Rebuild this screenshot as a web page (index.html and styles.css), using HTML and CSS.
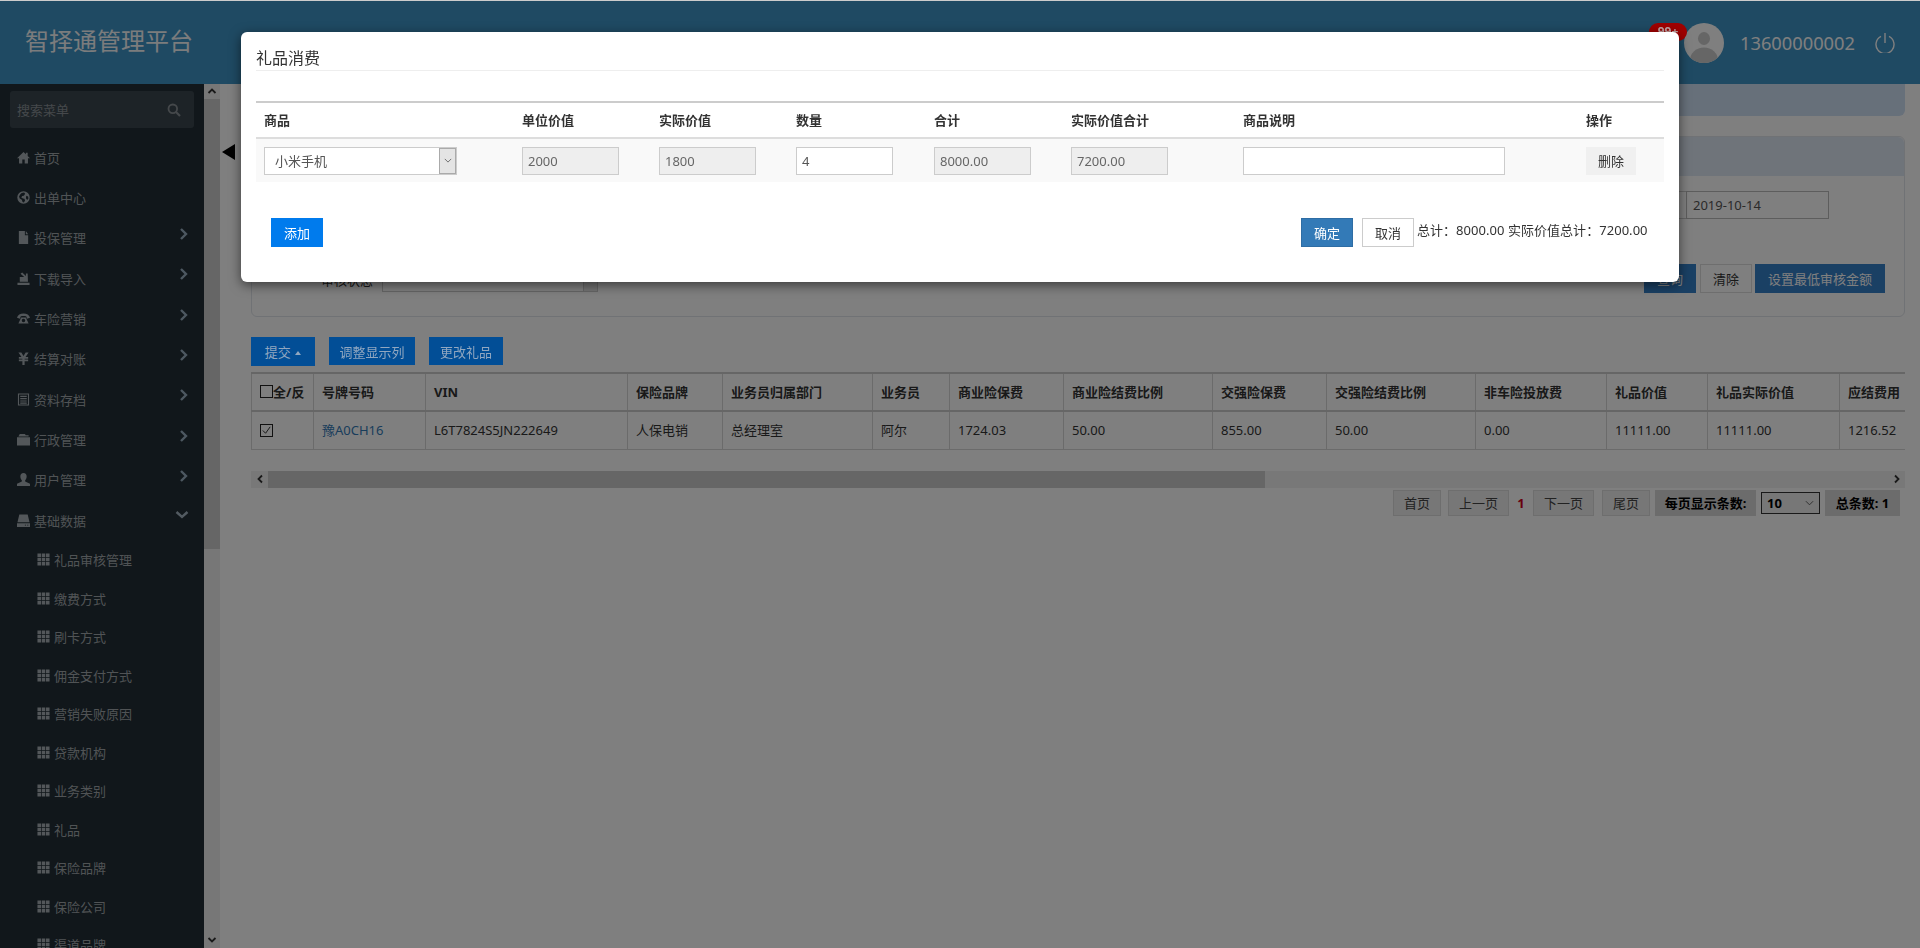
FILE: index.html
```html
<!DOCTYPE html>
<html lang="zh-CN">
<head>
<meta charset="utf-8">
<title>智择通管理平台</title>
<link rel="stylesheet" href="styles.css">
</head>
<body>
<svg class="defs" width="0" height="0">
  <symbol id="i-home" viewBox="0 0 14 14"><path d="M7 1 0 7.800h2.200V13.500h3.500V9.200h2.600v4.300h3.500V7.800H14l-2.500-2.400V2H9.600v1.500z"/></symbol>
  <symbol id="i-globe" viewBox="0 0 14 14"><path fill-rule="evenodd" d="M7 .3a6.700 6.700 0 1 0 0 13.400A6.700 6.700 0 0 0 7 .3zM5 2.200 7.600 1.600l1.200 1.400L7.400 5 5.600 5.400 4.600 7l1.800 1.200L8 8.400l.7 1.800L7.400 12.300 6 11.900 5.200 9.400 3 8 2.200 6 3.400 3.800zM10 5l2 .8.300 2.200-1.300 1.800-1.400-2z"/></symbol>
  <symbol id="i-phone" viewBox="0 0 14 14"><path fill-rule="evenodd" d="M0 6.200C.6 3 3.600 1.500 7 1.500s6.400 1.500 7 4.700l-3.300 1-.6-2.400C8.700 4.300 5.300 4.300 3.900 4.800l-.6 2.400zM4.500 5.800h5L12.500 12.500H1.500zM7 7.200a1.900 1.900 0 1 0 0 3.800 1.900 1.900 0 0 0 0-3.800z"/></symbol>
  <symbol id="i-file" viewBox="0 0 14 14"><path d="M2 0h6.500v4.500H12V14H2zM9.500 0 12 3.500H9.500z"/></symbol>
  <symbol id="i-import" viewBox="0 0 14 14"><path d="M.5 11.500h13V14H.5zM3 5.500h4.800L3.800 2 5.600.5 9.600 4.400V1.500h1.900l.3 9H3z"/></symbol>
  <symbol id="i-yen" viewBox="0 0 14 14"><path d="M1.500 .5h3.200L7 4.200 9.300 .5h3.200L9.200 5.500h2.800v1.700H8.200v1h3.800v1.700H8.200v4H5.800v-4H2V8.200h3.800v-1H2V5.500h2.800z"/></symbol>
  <symbol id="i-list" viewBox="0 0 14 14"><path fill-rule="evenodd" d="M1 .5h12v13H1zM2.200 1.700v10.600h9.600V1.700zM3.500 3h7v1.200h-7zM3.500 5.500h7v1.200h-7zM3.500 8h7v1.200h-7zM3.500 10.300h7v1.200h-7z"/></symbol>
  <symbol id="i-folder" viewBox="0 0 14 14"><path d="M3 1h5.500l1 1.500H12.500v1.200H1.500zM0 4.500h14v9H0z"/></symbol>
  <symbol id="i-user" viewBox="0 0 14 14"><path d="M7 0c2.200 0 3.400 1.600 3.400 3.800 0 1.600-.6 3.200-1.600 3.900v1.400l5.200 2.400V14H0v-2.500l5.200-2.400V7.700C4.200 7 3.600 5.400 3.600 3.800 3.600 1.600 4.800 0 7 0z"/></symbol>
  <symbol id="i-hdd" viewBox="0 0 14 14"><path fill-rule="evenodd" d="M2.500 .5h9l2 8.500H.5zM0 10h14v4H0zM8.500 11.500v1h1.200v-1zM11 11.500v1h1.200v-1z"/></symbol>
  <symbol id="i-th" viewBox="0 0 14 14"><path d="M.5 .5h3.800v3.800H.5zM5.100 .5h3.800v3.800H5.100zM9.700 .5h3.800v3.800H9.700zM.5 5.100h3.800v3.800H.5zM5.100 5.100h3.800v3.800H5.100zM9.700 5.100h3.800v3.800H9.700zM.5 9.700h3.800v3.800H.5zM5.100 9.700h3.800v3.800H5.100zM9.700 9.700h3.800v3.800H9.700z"/></symbol>
</svg>

<div class="page">
  <header class="topbar">
    <div class="brand">智择通管理平台</div>
    <div class="topbar-right">
      <span class="badge">99+</span>
      <svg class="avatar" viewBox="0 0 40 40"><defs><clipPath id="av"><circle cx="20" cy="20" r="20"/></clipPath></defs><g clip-path="url(#av)"><rect width="40" height="40" fill="#ffffff"/><ellipse cx="20" cy="15.500" rx="6" ry="6.500" fill="#cccccc"/><ellipse cx="20" cy="37" rx="14" ry="12.500" fill="#cccccc"/></g></svg>
      <span class="phone">13600000002</span>
      <svg class="power" viewBox="0 0 20 20"><path d="M6 3.400a9 9 0 1 0 8 0M10 0v10" fill="none" stroke="currentColor" stroke-width="1.400"/></svg>
    </div>
  </header>

  <div class="main">
    <aside class="sidebar">
      <div class="search">
        <span>搜索菜单</span>
        <svg class="search-icon" viewBox="0 0 14 14"><circle cx="5.800" cy="5.800" r="4.300" fill="none" stroke="currentColor" stroke-width="1.800"/><path d="m9 9 4 4" stroke="currentColor" stroke-width="2.200"/></svg>
      </div>
      <nav class="menu">
        <a class="item"><svg class="ico"><use href="#i-home"/></svg>首页</a>
        <a class="item"><svg class="ico"><use href="#i-globe"/></svg>出单中心</a>
        <a class="item"><svg class="ico"><use href="#i-file"/></svg>投保管理<svg class="chev" viewBox="0 0 10 12"><path d="m2 1 5 5-5 5" fill="none" stroke="currentColor" stroke-width="2.400"/></svg></a>
        <a class="item"><svg class="ico"><use href="#i-import"/></svg>下载导入<svg class="chev" viewBox="0 0 10 12"><path d="m2 1 5 5-5 5" fill="none" stroke="currentColor" stroke-width="2.400"/></svg></a>
        <a class="item"><svg class="ico"><use href="#i-phone"/></svg>车险营销<svg class="chev" viewBox="0 0 10 12"><path d="m2 1 5 5-5 5" fill="none" stroke="currentColor" stroke-width="2.400"/></svg></a>
        <a class="item"><svg class="ico"><use href="#i-yen"/></svg>结算对账<svg class="chev" viewBox="0 0 10 12"><path d="m2 1 5 5-5 5" fill="none" stroke="currentColor" stroke-width="2.400"/></svg></a>
        <a class="item"><svg class="ico"><use href="#i-list"/></svg>资料存档<svg class="chev" viewBox="0 0 10 12"><path d="m2 1 5 5-5 5" fill="none" stroke="currentColor" stroke-width="2.400"/></svg></a>
        <a class="item"><svg class="ico"><use href="#i-folder"/></svg>行政管理<svg class="chev" viewBox="0 0 10 12"><path d="m2 1 5 5-5 5" fill="none" stroke="currentColor" stroke-width="2.400"/></svg></a>
        <a class="item"><svg class="ico"><use href="#i-user"/></svg>用户管理<svg class="chev" viewBox="0 0 10 12"><path d="m2 1 5 5-5 5" fill="none" stroke="currentColor" stroke-width="2.400"/></svg></a>
        <a class="item"><svg class="ico"><use href="#i-hdd"/></svg>基础数据<svg class="chev-down" viewBox="0 0 14 10"><path d="m1.500 2 5.500 5 5.500-5" fill="none" stroke="currentColor" stroke-width="2.400"/></svg></a>
        <a class="sub"><svg class="ico ico-th"><use href="#i-th"/></svg>礼品审核管理</a>
        <a class="sub"><svg class="ico ico-th"><use href="#i-th"/></svg>缴费方式</a>
        <a class="sub"><svg class="ico ico-th"><use href="#i-th"/></svg>刷卡方式</a>
        <a class="sub"><svg class="ico ico-th"><use href="#i-th"/></svg>佣金支付方式</a>
        <a class="sub"><svg class="ico ico-th"><use href="#i-th"/></svg>营销失败原因</a>
        <a class="sub"><svg class="ico ico-th"><use href="#i-th"/></svg>贷款机构</a>
        <a class="sub"><svg class="ico ico-th"><use href="#i-th"/></svg>业务类别</a>
        <a class="sub"><svg class="ico ico-th"><use href="#i-th"/></svg>礼品</a>
        <a class="sub"><svg class="ico ico-th"><use href="#i-th"/></svg>保险品牌</a>
        <a class="sub"><svg class="ico ico-th"><use href="#i-th"/></svg>保险公司</a>
        <a class="sub"><svg class="ico ico-th"><use href="#i-th"/></svg>渠道品牌</a>
      </nav>
    </aside>

    <div class="vscroll">
      <svg class="vs-arrow" viewBox="0 0 10 8"><path d="m1.500 6 3.500-3.500L8.500 6" fill="none" stroke="currentColor" stroke-width="1.800"/></svg>
      <div class="vs-thumb"></div>
      <svg class="vs-arrow vs-bottom" viewBox="0 0 10 8"><path d="m1.500 2 3.500 3.500L8.500 2" fill="none" stroke="currentColor" stroke-width="1.800"/></svg>
    </div>

    <main class="content">
      <span class="collapse"></span>
      <div class="crumb"></div>
      <section class="panel">
        <div class="panel-head"></div>
        <div class="panel-body">
          <div class="date-row">
            <span class="date-addon"></span>
            <span class="date-box">2019-10-14</span>
          </div>
          <div class="action-row">
            <label class="status-label">审核状态</label>
            <span class="status-select"><i></i></span>
            <span class="actions">
              <button class="btn btn-primary">查询</button>
              <button class="btn btn-plain">清除</button>
              <button class="btn btn-primary btn-wide">设置最低审核金额</button>
            </span>
          </div>
        </div>
      </section>

      <div class="toolbar">
        <button class="tool tool-submit">提交 <i class="caret"></i></button>
        <button class="tool tool-columns">调整显示列</button>
        <button class="tool tool-gift">更改礼品</button>
      </div>

      <div class="table-wrap">
        <table class="grid">
          <colgroup>
            <col class="w1"><col class="w2"><col class="w3"><col class="w4"><col class="w5"><col class="w6"><col class="w7"><col class="w8"><col class="w9"><col class="w10"><col class="w11"><col class="w12"><col class="w13"><col class="w14">
          </colgroup>
          <thead>
            <tr>
              <th><span class="check"></span>全/反</th><th>号牌号码</th><th>VIN</th><th>保险品牌</th><th>业务员归属部门</th><th>业务员</th><th>商业险保费</th><th>商业险结费比例</th><th>交强险保费</th><th>交强险结费比例</th><th>非车险投放费</th><th>礼品价值</th><th>礼品实际价值</th><th>应结费用</th>
            </tr>
          </thead>
          <tbody>
            <tr>
              <td><span class="check check-on"><svg viewBox="0 0 12 12"><path d="m2 6 3 3 5-7" fill="none" stroke="currentColor" stroke-width="1"/></svg></span></td><td><a class="plate">豫A0CH16</a></td><td>L6T7824S5JN222649</td><td>人保电销</td><td>总经理室</td><td>阿尔</td><td>1724.03</td><td>50.00</td><td>855.00</td><td>50.00</td><td>0.00</td><td>11111.00</td><td>11111.00</td><td>1216.52</td>
            </tr>
          </tbody>
        </table>
      </div>

      <div class="hscroll">
        <span class="hs-btn"><svg viewBox="0 0 8 10"><path d="M6 1.500 2.500 5 6 8.500" fill="none" stroke="currentColor" stroke-width="1.800"/></svg></span>
        <span class="hs-thumb"></span>
        <span class="hs-btn hs-right"><svg viewBox="0 0 8 10"><path d="M2 1.500 5.500 5 2 8.500" fill="none" stroke="currentColor" stroke-width="1.800"/></svg></span>
      </div>

      <div class="pager">
        <a class="pg pg-2">首页</a>
        <a class="pg pg-3">上一页</a>
        <b class="pg-current">1</b>
        <a class="pg pg-3">下一页</a>
        <a class="pg pg-2">尾页</a>
        <span class="pg-info pg-size">每页显示条数:</span>
        <span class="pg-select">10<svg viewBox="0 0 10 6"><path d="m1 1 4 4 4-4" fill="none" stroke="currentColor"/></svg></span>
        <span class="pg-info pg-total">总条数: 1</span>
      </div>
    </main>
  </div>
</div>

<div class="backdrop"></div>

<div class="modal">
  <h2 class="modal-title">礼品消费</h2>
  <table class="gift">
    <colgroup>
      <col class="g1"><col class="g2"><col class="g3"><col class="g4"><col class="g5"><col class="g6"><col class="g7"><col class="g8">
    </colgroup>
    <thead>
      <tr><th>商品</th><th>单位价值</th><th>实际价值</th><th>数量</th><th>合计</th><th>实际价值合计</th><th>商品说明</th><th>操作</th></tr>
    </thead>
    <tbody>
      <tr>
        <td><span class="product"><span>小米手机</span><i class="product-arrow"><svg viewBox="0 0 10 6"><path d="m1 1 4 4 4-4" fill="none" stroke="currentColor"/></svg></i></span></td>
        <td><input class="field" value="2000" disabled></td>
        <td><input class="field" value="1800" disabled></td>
        <td><input class="field" value="4"></td>
        <td><input class="field" value="8000.00" disabled></td>
        <td><input class="field" value="7200.00" disabled></td>
        <td><input class="field field-note" value=""></td>
        <td><button class="del">删除</button></td>
      </tr>
    </tbody>
  </table>
  <div class="modal-foot">
    <button class="m-btn m-add">添加</button>
    <div class="foot-right">
      <button class="m-btn m-ok">确定</button>
      <button class="m-btn m-cancel">取消</button>
      <span class="sum">总计：8000.00 实际价值总计：7200.00</span>
    </div>
  </div>
</div>
</body>
</html>
```

FILE: styles.css
```css
* { box-sizing: border-box; }
html, body { margin: 0; height: 100%; overflow: hidden; }
body { font-family: "Noto Sans", "Noto Sans CJK SC", sans-serif; font-size: 13px; color: #555; background: #fff; }
.defs { display: block; height: 0; }
button { font-family: inherit; }

.page { height: 948px; display: flex; flex-direction: column; }

.topbar { height: 84px; flex: none; background: #3e94c6; border-top: 1px solid #ccc; display: flex; align-items: center; justify-content: space-between; color: #f6f8fa; }
.brand { font-size: 24px; line-height: 32px; margin-left: 25px; margin-top: -3px; }
.topbar-right { display: flex; align-items: center; margin-right: 25px; position: relative; }
.badge { position: absolute; left: -35px; top: 0; z-index: 2; width: 38px; height: 18px; border-radius: 9px; background: #a00000; color: #c4a3a3; font-size: 12px; font-weight: 700; line-height: 17px; text-align: center; }
.avatar { width: 40px; height: 40px; display: block; }
.phone { font-size: 18.300px; line-height: 24px; margin-left: 16px; color: #fff; }
.power { width: 20px; height: 20px; margin-left: 20px; color: #fff; }

.main { flex: 1; display: flex; min-height: 0; }

.sidebar { width: 204px; flex: none; background: #222e36; padding: 7px 10px 0; overflow: hidden; color: #a8b0b6; }
.search { height: 37px; border-radius: 3px; background: #3a474f; display: flex; align-items: center; justify-content: space-between; padding: 0 13px 0 7px; color: #8a9196; }
.search-icon { width: 14px; height: 14px; }
.menu { margin: 9px -10px 0; }
.item, .sub { display: flex; align-items: center; color: #a0a7ab; }
.item { height: 40.350px; padding-left: 17px; }
.sub { height: 38.500px; padding-left: 37px; }
.ico { width: 13px; height: 13px; margin-right: 4px; fill: #a6aeb4; flex: none; }
.chev { width: 10px; height: 12px; margin-left: auto; margin-right: 15px; margin-bottom: 8px; color: #9bb0c2; }
.chev-down { width: 14px; height: 10px; margin-left: auto; margin-right: 15px; margin-bottom: 10px; color: #a5b5c2; }

.vscroll { width: 16px; flex: none; background: #eeeeee; position: relative; display: flex; flex-direction: column; align-items: center; color: #333; }
.vs-arrow { width: 10px; height: 8px; margin-top: 3px; flex: none; }
.vs-thumb { width: 16px; height: 450px; margin-top: 4px; background: #cdcdcd; }
.vs-bottom { margin-top: auto; margin-bottom: 4px; }

.content { flex: 1; min-width: 0; position: relative; padding: 0 15px 0 31px; overflow: hidden; }
.collapse { position: absolute; left: 2px; top: 60px; width: 0; height: 0; border-style: solid; border-width: 8px 13px 8px 0; border-color: transparent #000 transparent transparent; z-index: 5; }

.crumb { height: 32px; background: #cfe0f5; border-radius: 0 0 6px 6px; }
.panel { margin-top: 20px; height: 181px; border: 1px solid #e0e4ea; border-radius: 6px; background: #fff; }
.panel-head { height: 39px; background: #dfe8f5; border-radius: 6px 6px 0 0; }
.panel-body { padding-top: 15px; }
.date-row { display: flex; justify-content: flex-end; padding-right: 75px; height: 28px; }
.date-addon { width: 90px; height: 28px; border: 1px solid #ccc; border-right: 0; }
.date-box { width: 143px; height: 28px; border: 1px solid #bbb; padding: 0 6px; font-size: 13px; line-height: 26px; color: #555; }
.action-row { margin-top: 45px; position: relative; height: 29px; display: flex; align-items: flex-start; color: #333; }
.status-label { margin-left: 69px; width: 61px; line-height: 33px; }
.status-select { width: 216px; height: 28px; border: 1px solid #ccc; position: relative; display: block; }
.status-select i { position: absolute; right: 0; top: 0; bottom: 0; width: 14px; background: #e8e8e8; border-left: 1px solid #ccc; }
.actions { margin-left: auto; margin-right: 18px; display: flex; gap: 3px; }
.btn { height: 29px; width: 52px; border: 0; padding: 0; font-size: 13px; color: #fff; }
.btn-primary { background: #3580c8; margin-right: 1px; }
.btn-plain { background: #fff; color: #333; border: 1px solid #ddd; }
.btn-wide { width: 130px; }

.toolbar { display: flex; align-items: flex-start; gap: 14px; margin-top: 20px; height: 35px; }
.tool { position: relative; z-index: 2; height: 28px; border: 0; padding: 0; background: #024e96; color: #91a7c0; font-size: 13px; }
.tool-submit { width: 64px; height: 29px; }
.tool-columns { width: 86px; }
.tool-gift { width: 74px; }
.caret { display: inline-block; width: 0; height: 0; border-style: solid; border-width: 0 3.500px 4px; border-color: transparent transparent #91a7c0; vertical-align: 2px; margin-left: 1px; }

.table-wrap { overflow: hidden; }
.grid { border-collapse: collapse; table-layout: fixed; width: 1680px; color: #333; }
.grid th, .grid td { border: 1px solid #d6d6d6; padding: 0 8px; text-align: left; white-space: nowrap; overflow: hidden; font-size: 13px; line-height: 18px; }
.grid th { border-top: 2px solid #ccc; border-bottom: 2px solid #ccc; height: 38px; font-weight: 700; }
.grid td { height: 38px; }
.w1 { width: 62px; } .w2 { width: 112px; } .w3 { width: 202px; } .w4 { width: 95px; } .w5 { width: 150px; } .w6 { width: 77px; } .w7 { width: 114px; } .w8 { width: 149px; } .w9 { width: 114px; } .w10 { width: 149px; } .w11 { width: 131px; } .w12 { width: 101px; } .w13 { width: 132px; } .w14 { width: 92px; }
.plate { color: #337ab7; }
.check { display: inline-block; width: 13px; height: 13px; border: 1px solid #222; vertical-align: -1px; background: #fff; color: #222; }
.check svg { display: block; width: 11px; height: 11px; }
.check-on { vertical-align: -2px; }

.hscroll { margin-top: 21px; height: 17px; background: #f1f1f1; display: flex; }
.hs-btn { width: 17px; flex: none; display: flex; align-items: center; justify-content: center; color: #333; }
.hs-btn svg { width: 8px; height: 10px; }
.hs-thumb { width: 997px; background: #cdcdcd; }
.hs-right { margin-left: auto; }

.pager { display: flex; align-items: center; height: 26px; margin-top: 2px; color: #444; }
.pg { height: 26px; border: 1px solid #ddd; background: #eeeeee; display: flex; align-items: center; justify-content: center; }
.pg-2 { width: 48px; }
.pg-3 { width: 61px; }
.pg:first-child { margin-left: 1142px; }
.pager .pg-2 + .pg-3 { margin-left: 7px; }
.pg-current { width: 24px; text-align: center; color: #d0021b; }
.pg-3 + .pg-2 { margin-left: 8px; }
.pg-info { height: 26px; display: flex; align-items: center; justify-content: center; background: #d8d8d8; color: #000; font-weight: 700; }
.pg-size { width: 101px; margin-left: 5px; }
.pg-total { width: 75px; margin-left: 5px; }
.pg-select { width: 59px; height: 22px; margin-left: 5px; border: 1px solid #333; background: #eee; display: flex; align-items: center; justify-content: space-between; padding: 0 5px; color: #000; font-weight: 700; }
.pg-select svg { width: 9px; height: 6px; color: #555; }

.backdrop { position: fixed; inset: 1px 0 0; background: rgba(0, 0, 0, .5); }

.modal { position: fixed; z-index: 3; left: 241px; top: 32px; width: 1438px; height: 250px; background: #fff; border-radius: 6px; box-shadow: 0 3px 12px rgba(0, 0, 0, .55); padding: 0 15px; color: #333; }
.modal-title { margin: 0; border-bottom: 1px solid #eee; font-size: 16px; font-weight: 400; line-height: 24px; padding-top: 14px; height: 39px; }
.gift { margin-top: 30px; border-collapse: collapse; table-layout: fixed; width: 1408px; }
.g1 { width: 258px; } .g2 { width: 137px; } .g3 { width: 137px; } .g4 { width: 138px; } .g5 { width: 137px; } .g6 { width: 172px; } .g7 { width: 343px; } .g8 { width: 86px; }
.gift th { border-top: 2px solid #ccc; border-bottom: 2px solid #ddd; height: 36px; padding: 0 8px; text-align: left; font-weight: 700; font-size: 13px; line-height: 18px; color: #333; }
.gift td { background: #f9f9f9; height: 44px; padding: 0 8px; }
.field { display: block; width: 97px; height: 28px; border: 1px solid #ccc; padding: 0 5px; background: #fff; font: 13px "Noto Sans", "Noto Sans CJK SC", sans-serif; color: #555; outline: 0; }
.field:disabled { background: #eee; color: #666; }
.field-note { width: 262px; }
.product { width: 193px; height: 28px; border: 1px solid #ccc; background: #fff; display: flex; align-items: center; justify-content: space-between; padding-left: 10px; color: #555; position: relative; }
.product-arrow { width: 17px; height: 26px; background: #e4e4e4; border: 1px solid #aaa; display: flex; align-items: center; justify-content: center; color: #555; }
.product-arrow svg { width: 8px; height: 5px; }
.del { width: 50px; height: 28px; border: 0; background: #f0f0f0; color: #333; font-size: 13px; padding: 0; }
.modal-foot { display: flex; justify-content: space-between; align-items: flex-start; margin-top: 36px; padding: 0 15px; }
.m-btn { width: 52px; height: 29px; border: 0; padding: 0; font-size: 13px; }
.m-add { background: #007bed; color: #fff; }
.foot-right { display: flex; align-items: flex-start; }
.m-ok { background: #337ab7; color: #fff; border: 1px solid #2e6da4; }
.m-cancel { background: #fff; color: #333; border: 1px solid #ccc; margin-left: 9px; }
.sum { margin-left: 3px; line-height: 25px; width: 232px; white-space: nowrap; letter-spacing: .04px; }
```
